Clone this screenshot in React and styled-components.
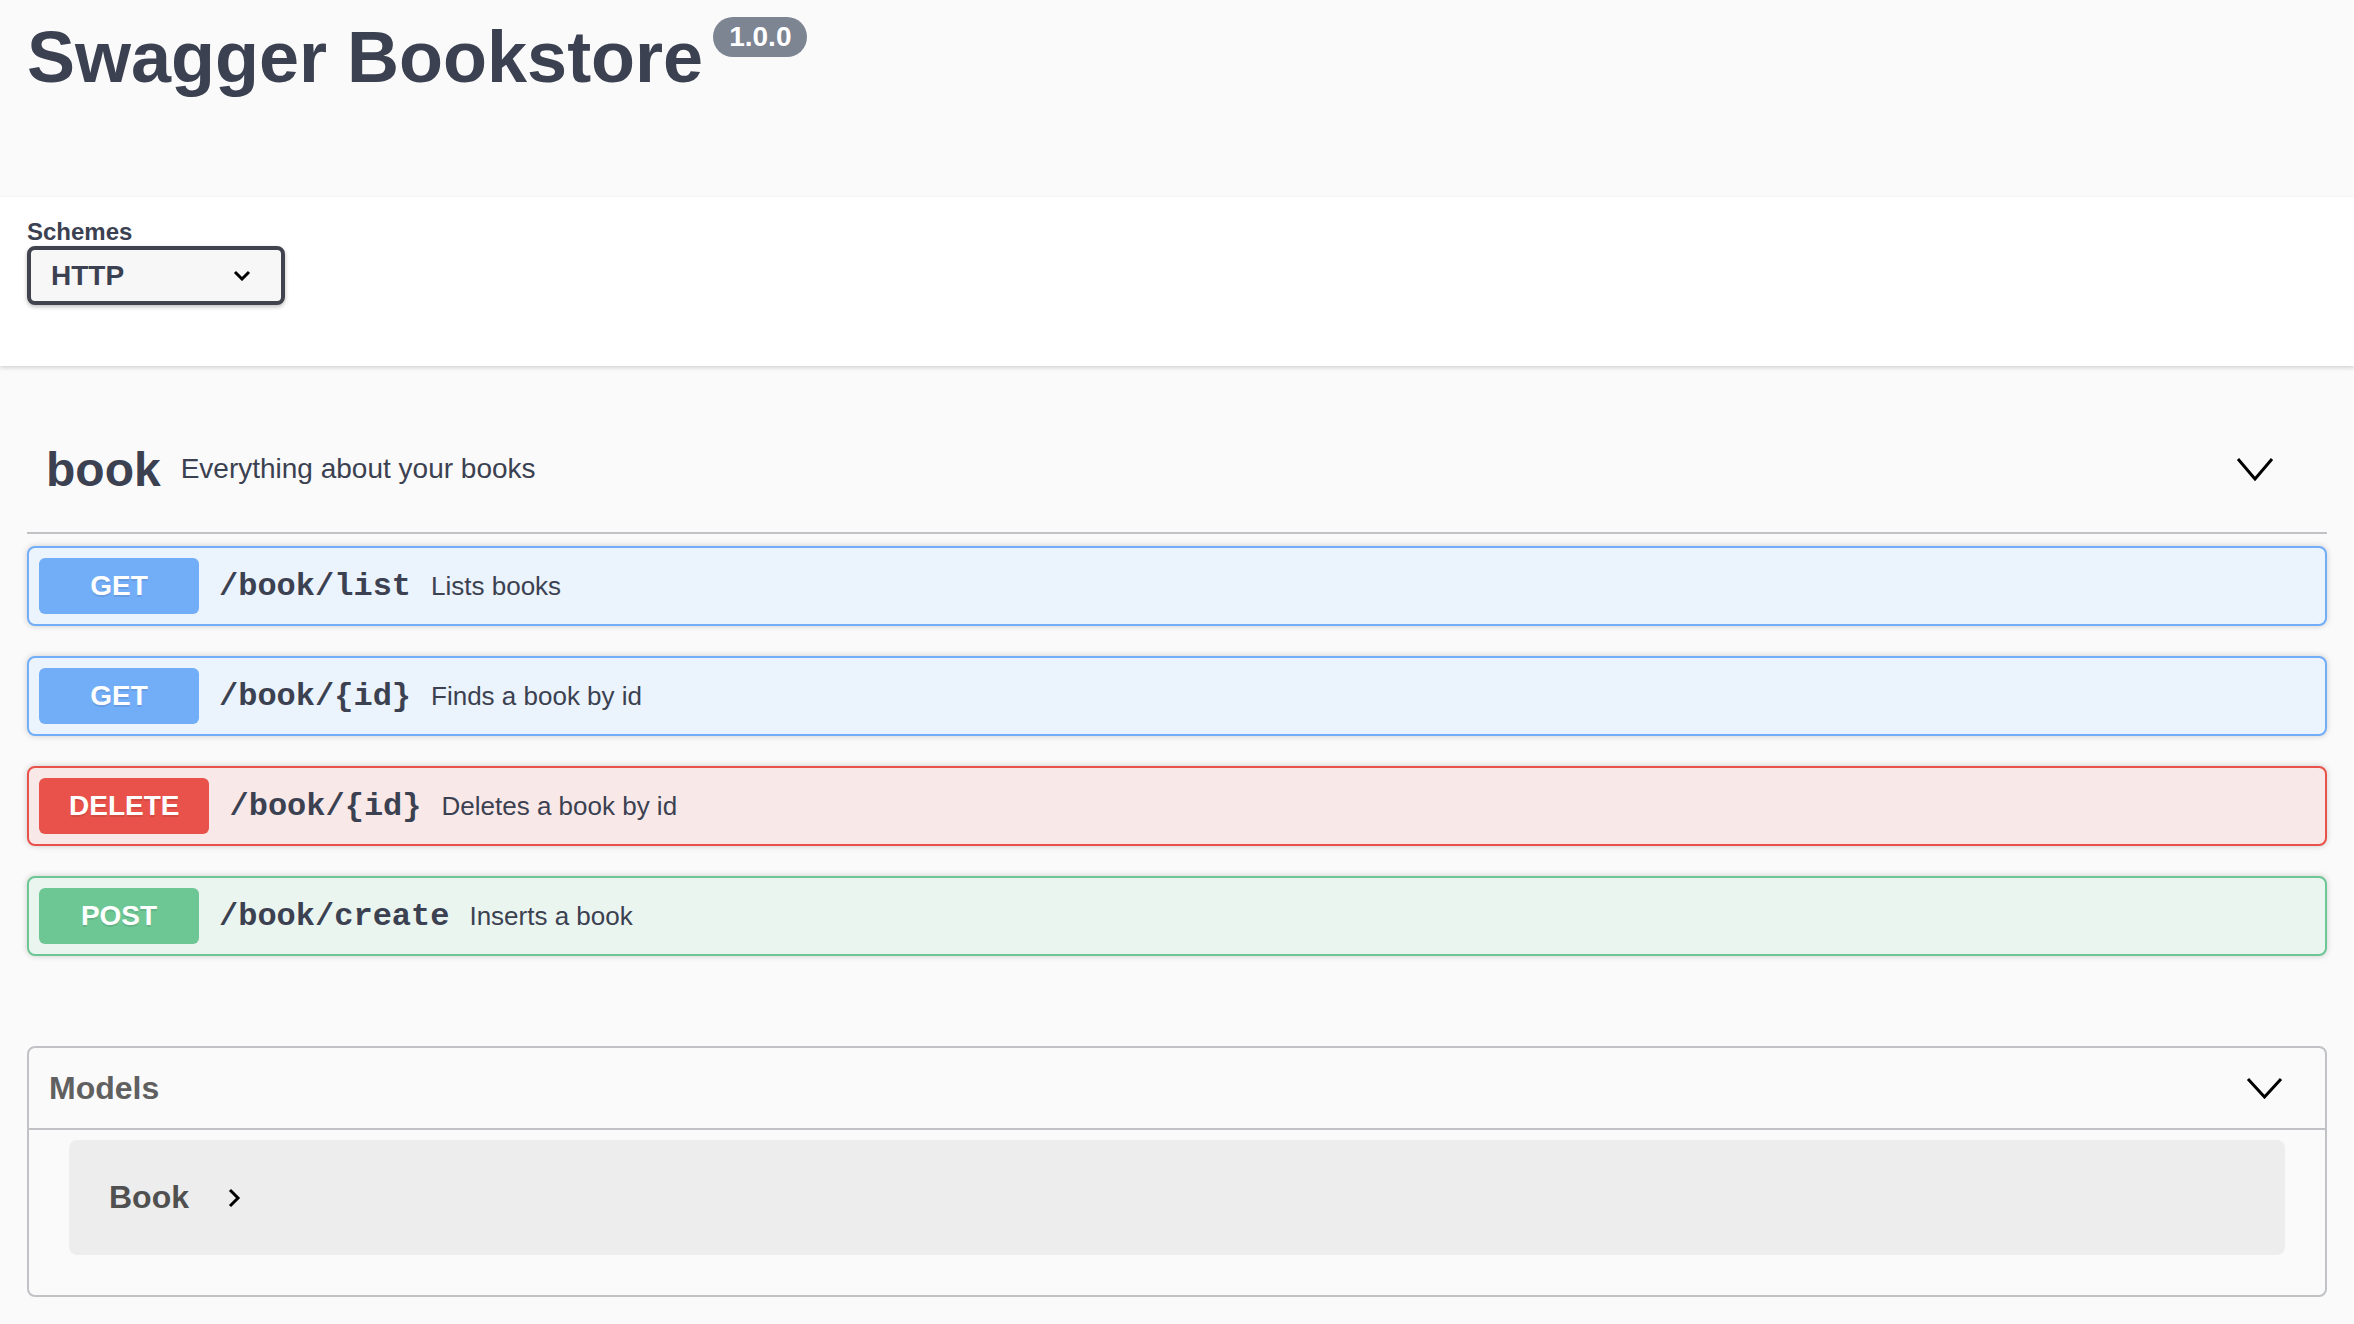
import styled, { createGlobalStyle } from "styled-components";

const GlobalStyle = createGlobalStyle`
    * { box-sizing: border-box; }
    body {
        margin: 0;
        background: #fafafa;
        font-family: "Liberation Sans", Arial, sans-serif;
        color: #3b4151;
    }
`;

const operations = [
    { method: "GET", path: "/book/list", summary: "Lists books" },
    { method: "GET", path: "/book/{id}", summary: "Finds a book by id" },
    { method: "DELETE", path: "/book/{id}", summary: "Deletes a book by id" },
    { method: "POST", path: "/book/create", summary: "Inserts a book" },
];

const methodColors = {
    GET: { main: "#72aef8", bg: "#ebf3fc" },
    DELETE: { main: "#e9524a", bg: "#f9e8e8" },
    POST: { main: "#6dc794", bg: "#ebf5f0" },
};

function Chevron({ width, height, stroke = 3 }) {
    return (
        <svg width={width} height={height} viewBox={`0 0 ${width} ${height}`}>
            <polyline
                points={`2,2 ${width / 2},${height - 2} ${width - 2},2`}
                fill="none"
                stroke="#000"
                strokeWidth={stroke}
            />
        </svg>
    );
}

export default function App() {
    return (
        <>
            <GlobalStyle />
            <Info>
                <TitleRow>
                    <Title>Swagger Bookstore</Title>
                    <Version>1.0.0</Version>
                </TitleRow>
            </Info>
            <SchemeBar>
                <SchemeLabel>Schemes</SchemeLabel>
                <Select>
                    <span>HTTP</span>
                    <Chevron width={18} height={11} stroke={3} />
                </Select>
            </SchemeBar>
            <Main>
                <TagHeader>
                    <TagName>book</TagName>
                    <TagDesc>Everything about your books</TagDesc>
                    <Chevron width={38} height={24} stroke={3} />
                </TagHeader>
                <OpList>
                    {operations.map((op, i) => (
                        <OpBlock key={i} $method={op.method}>
                            <MethodBadge $method={op.method}>{op.method}</MethodBadge>
                            <OpPath>{op.path}</OpPath>
                            <OpSummary>{op.summary}</OpSummary>
                        </OpBlock>
                    ))}
                </OpList>
                <Models>
                    <ModelsHeader>
                        <ModelsTitle>Models</ModelsTitle>
                        <Chevron width={37} height={22} stroke={3} />
                    </ModelsHeader>
                    <ModelBox>
                        <ModelName>Book</ModelName>
                        <svg width="14" height="20" viewBox="0 0 14 20">
                            <polyline points="3,2 11,10 3,18" fill="none" stroke="#000" strokeWidth="3" />
                        </svg>
                    </ModelBox>
                </Models>
            </Main>
        </>
    );
}

const Info = styled.div`
    height: 197px;
    padding: 17px 27px 0;
    background: #fafafa;
`;

const TitleRow = styled.div`
    display: flex;
    align-items: flex-start;
`;

const Title = styled.h2`
    margin: 0;
    font-size: 72px;
    font-weight: bold;
    line-height: 80px;
    color: #3b4151;
`;

const Version = styled.span`
    display: inline-flex;
    align-items: center;
    height: 40px;
    margin: 0 0 0 10px;
    padding: 0 16px;
    border-radius: 57px;
    background: #7d8492;
    color: #fff;
    font-size: 28px;
    font-weight: bold;
`;

const SchemeBar = styled.div`
    background: #fff;
    padding: 21px 27px 61px;
    box-shadow: 0 2px 4px 0 rgba(0, 0, 0, 0.15);
`;

const SchemeLabel = styled.div`
    font-size: 24px;
    font-weight: bold;
    line-height: 28px;
    color: #3b4151;
`;

const Select = styled.div`
    display: flex;
    align-items: center;
    justify-content: space-between;
    width: 258px;
    height: 59px;
    padding: 0 30px 0 20px;
    border: 4px solid #41444e;
    border-radius: 8px;
    background: #f7f7f7;
    box-shadow: 0 2px 4px 0 rgba(0, 0, 0, 0.25);
    font-size: 28px;
    font-weight: bold;
    color: #3b4151;
`;

const Main = styled.div`
    margin-top: 40px;
    padding: 0 27px 27px;
`;

const TagHeader = styled.div`
    display: flex;
    align-items: center;
    height: 128px;
    padding: 0 53px 0 19px;
    border-bottom: 2px solid rgba(59, 65, 81, 0.3);
`;

const TagName = styled.span`
    font-size: 48px;
    font-weight: bold;
    color: #3b4151;
`;

const TagDesc = styled.span`
    flex: 1;
    padding: 0 20px;
    font-size: 28px;
    color: #3b4151;
`;

const OpList = styled.div`
    display: flex;
    flex-direction: column;
    gap: 30px;
    margin-top: 12px;
`;

const OpBlock = styled.div`
    display: flex;
    align-items: center;
    height: 80px;
    padding: 10px;
    border: 2px solid ${(p) => methodColors[p.$method].main};
    border-radius: 8px;
    background: ${(p) => methodColors[p.$method].bg};
    box-shadow: 0 0 6px rgba(0, 0, 0, 0.19);
`;

const MethodBadge = styled.span`
    display: flex;
    align-items: center;
    justify-content: center;
    min-width: 160px;
    height: 56px;
    padding: 0 30px;
    border-radius: 6px;
    background: ${(p) => methodColors[p.$method].main};
    color: #fff;
    font-size: 28px;
    font-weight: bold;
    text-shadow: 0 2px 0 rgba(0, 0, 0, 0.1);
`;

const OpPath = styled.span`
    padding: 0 20px;
    font-family: "Liberation Mono", "Courier New", monospace;
    font-size: 32px;
    font-weight: bold;
    color: #3b4151;
`;

const OpSummary = styled.span`
    font-size: 26px;
    color: #3b4151;
`;

const Models = styled.section`
    margin-top: 90px;
    border: 2px solid rgba(59, 65, 81, 0.3);
    border-radius: 8px;
    padding-bottom: 40px;
`;

const ModelsHeader = styled.div`
    display: flex;
    align-items: center;
    justify-content: space-between;
    height: 82px;
    padding: 0 42px 0 20px;
    border-bottom: 2px solid rgba(59, 65, 81, 0.3);
`;

const ModelsTitle = styled.h4`
    margin: 0;
    font-size: 32px;
    font-weight: bold;
    color: #606060;
`;

const ModelBox = styled.div`
    display: flex;
    align-items: center;
    gap: 38px;
    height: 115px;
    margin: 10px 40px 0;
    padding: 0 40px;
    border-radius: 8px;
    background: rgba(0, 0, 0, 0.05);
`;

const ModelName = styled.span`
    font-size: 32px;
    font-weight: bold;
    color: #505050;
`;
